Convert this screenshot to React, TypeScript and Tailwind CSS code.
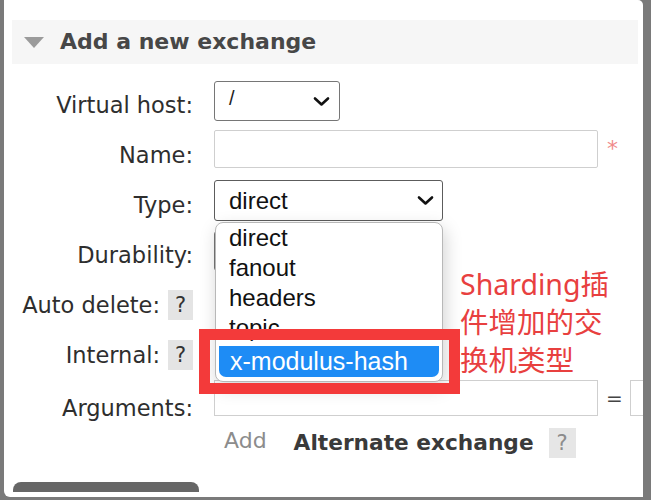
import React from 'react';

const Chevron = () => (
  <svg width="17" height="11" viewBox="0 0 17 11" className="shrink-0">
    <path d="M2 2.5 L8.5 8.5 L15 2.5" fill="none" stroke="#111" strokeWidth="2.6" strokeLinecap="round" strokeLinejoin="round" />
  </svg>
);

const Help = ({ muted }: { muted?: boolean }) => (
  <span
    className={`inline-flex items-center justify-center w-[25px] h-[30px] bg-[#e4e4e4] text-[21px] ${
      muted ? 'text-[#8c8c8c]' : 'text-[#333]'
    }`}
  >
    ?
  </span>
);

const Row = ({
  label,
  help,
  children,
  className = 'h-[50px]',
  labelClass = '',
}: {
  label: string;
  help?: boolean;
  children?: React.ReactNode;
  className?: string;
  labelClass?: string;
}) => (
  <div className={`flex shrink-0 ${className}`}>
    <div className={`w-[189px] shrink-0 flex items-center justify-end gap-[8px] ${labelClass}`}>
      <span>{label}</span>
      {help && <Help />}
    </div>
    <div className="ml-[21px] flex items-start">{children}</div>
  </div>
);

const options = ['direct', 'fanout', 'headers', 'topic'];

export default function App() {
  return (
    <div className="w-[651px] h-[500px] bg-[#7a7a7a] pl-[4px] pr-[8px] pb-[3px] overflow-hidden">
      <div className="relative h-full bg-white rounded-tr-[5px] rounded-bl-[6px] overflow-hidden font-['DejaVu_Sans',sans-serif] text-[22.5px] leading-[26px] text-[#2e2e2e]">
        {/* section header */}
        <div className="mt-[20px] ml-[8px] mr-[5px] h-[44px] bg-[#f6f6f6] flex items-center pl-[12px]">
          <svg width="20" height="11" viewBox="0 0 20 11">
            <path d="M0 0 H20 L10 11 Z" fill="#9b9b9b" />
          </svg>
          <span className="ml-[16px] text-[22px] font-bold text-[#474747]">Add a new exchange</span>
        </div>

        {/* form */}
        <div className="mt-[16px] flex flex-col">
          <Row label="Virtual host:">
            <div className="mt-[1px] w-[126px] h-[40px] border border-[#767676] rounded-[3px] flex items-center justify-between pl-[14px] pr-[9px] font-['Liberation_Sans',sans-serif] text-[20px] text-[#222]">
              <span className="-mt-[6px]">/</span>
              <Chevron />
            </div>
          </Row>
          <Row label="Name:">
            <div className="w-[384px] h-[38px] border border-[#cfcfcf] rounded-[2px]" />
            <span className="ml-[9px] mt-[6px] text-[#f08a8a] text-[22px]">*</span>
          </Row>
          <Row label="Type:">
            <div className="w-[229px] h-[41px] border border-[#5c5c5c] rounded-[3px] flex items-center justify-between pl-[14px] pr-[8px] font-['Liberation_Sans',sans-serif] text-[24px] text-[#111]">
              <span>direct</span>
              <Chevron />
            </div>
          </Row>
          <Row label="Durability:">
            <div className="mt-[1px] w-[229px] h-[40px] border border-[#767676] rounded-[3px]" />
          </Row>
          <Row label="Auto delete:" help />
          <Row label="Internal:" help />
          <Row label="Arguments:" className="h-[45px]" labelClass="h-[50px] pt-[6px]">
            <div className="w-[384px] h-[36px] shrink-0 border border-[#cfcfcf]" />
            <span className="ml-[8px] mt-[5px] shrink-0 text-[20px] text-[#444]">=</span>
            <div className="ml-[7px] w-[200px] h-[36px] shrink-0 border border-[#cfcfcf]" />
          </Row>
          <div className="flex items-center h-[36px] pl-[220px] shrink-0">
            <span className="text-[#8c8c8c] text-[22px] -mt-[5px]">Add</span>
            <span className="ml-[27px] font-bold text-[21.7px] text-[#3a3a3a]">Alternate exchange</span>
            <span className="ml-[15px] inline-flex items-center justify-center w-[27px] h-[30px] bg-[#e6e6e6] text-[21px] text-[#8c8c8c]">
              ?
            </span>
          </div>
          <div className="mt-[21px] ml-[9px] w-[186px] h-[10px] bg-[#666] rounded-t-[8px]" />
        </div>

        {/* open dropdown of the Type select */}
        <div className="absolute left-[211px] top-[222px] w-[228px] bg-white border border-[#b8b8b8] rounded-[8px] shadow-[2px_6px_18px_rgba(0,0,0,0.18)] overflow-hidden font-['Liberation_Sans',sans-serif] text-[24px] text-[#111] pb-[4px]">
          {options.map((o) => (
            <div key={o} className="h-[30px] leading-[30px] pl-[13px]">
              {o}
            </div>
          ))}
          <div className="mt-[3px] mx-[3px] h-[31px] leading-[31px] pl-[11px] bg-[#1e8cf5] text-white text-[25px] rounded-b-[7px]">
            x-modulus-hash
          </div>
        </div>

        {/* annotation */}
        <div className="absolute left-[195px] top-[329px] w-[261px] h-[65px] border-[11px] border-[#f33a3a]" />
        <div className="absolute left-[456px] top-[265px] font-['Noto_Sans','Noto_Sans_CJK_SC',sans-serif] text-[28.5px] leading-[38px] text-[#e8403f]">
          Sharding插
          <br />
          件增加的交
          <br />
          换机类型
        </div>
      </div>
    </div>
  );
}
